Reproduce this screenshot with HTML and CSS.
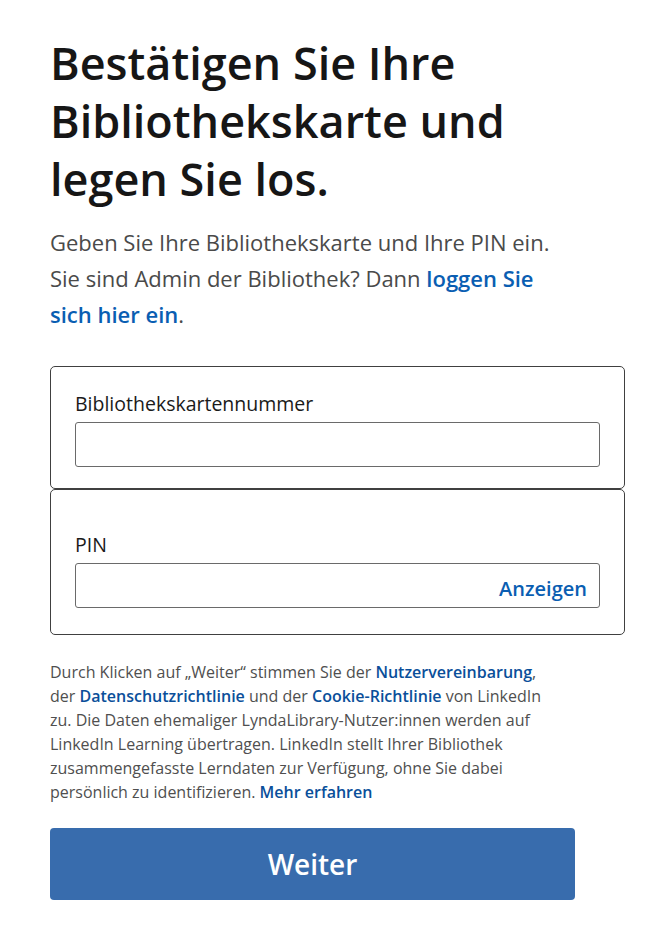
FILE: index.html
```html
<!DOCTYPE html>
<html lang="de">
<head>
    <meta charset="UTF-8">
    <meta name="viewport" content="width=device-width, initial-scale=1.0">
    <title>Bibliothekskarte bestätigen</title>
    <link rel="stylesheet" href="styles.css">
</head>
<body>
    <main class="page">
        <h1 class="title">Bestätigen Sie Ihre Bibliothekskarte und legen Sie los.</h1>
        <p class="intro">
            Geben Sie Ihre Bibliothekskarte und Ihre PIN ein.
            Sie sind Admin der Bibliothek? Dann <a href="#">loggen Sie sich hier ein</a>.
        </p>

        <form class="card-form" onsubmit="return false">
            <div class="field-card">
                <label class="field-label" for="cardNumber">Bibliothekskartennummer</label>
                <input class="field-input" id="cardNumber" type="text">
            </div>
            <div class="field-card field-card--pin">
                <label class="field-label" for="pin">PIN</label>
                <div class="pin-wrap">
                    <input class="field-input" id="pin" type="password">
                    <button type="button" class="show-btn">Anzeigen</button>
                </div>
            </div>

            <p class="legal">
                Durch Klicken auf „Weiter“ stimmen Sie der <a href="#">Nutzervereinbarung</a>,
                der <a href="#">Datenschutzrichtlinie</a> und der <a href="#">Cookie-Richtlinie</a> von LinkedIn
                zu. Die Daten ehemaliger LyndaLibrary-Nutzer:innen werden auf LinkedIn Learning übertragen.
                LinkedIn stellt Ihrer Bibliothek zusammengefasste Lerndaten zur Verfügung, ohne Sie dabei
                persönlich zu identifizieren. <a href="#">Mehr erfahren</a>
            </p>

            <button type="submit" class="submit-btn">Weiter</button>
        </form>
    </main>
</body>
</html>
```

FILE: styles.css
```css
body {
    margin: 0;
    background: #fff;
    font-family: "Open Sans", "Noto Sans", Arial, sans-serif;
    color: #1f1f1f;
}
.page {
    width: 575px;
    padding: 34px 43px 30px 50px;
}
.title {
    max-width: 525px;
    margin: 0;
    font-size: 45px;
    line-height: 58px;
    font-weight: 600;
    color: #161616;
}
.intro {
    max-width: 525px;
    margin: 16px 0 0;
    font-size: 22px;
    line-height: 36px;
    color: #4a4a4a;
}
a {
    color: #0a5eb2;
    font-weight: 600;
    text-decoration: none;
}
.card-form {
    margin-top: 34px;
}
.field-card {
    border: 1px solid #404040;
    border-radius: 5px;
    padding: 23px 24px 21px;
}
.field-card--pin {
    padding-top: 41px;
    padding-bottom: 26px;
}
.field-label {
    display: block;
    font-size: 19.5px;
    line-height: 28px;
    color: #1a1a1a;
    margin-bottom: 4px;
}
.field-input {
    display: block;
    box-sizing: border-box;
    width: 100%;
    height: 45px;
    border: 1px solid #6a6a6a;
    border-radius: 3px;
    padding: 0 12px;
    font-size: 18px;
    font-family: inherit;
}
.pin-wrap {
    position: relative;
}
.show-btn {
    position: absolute;
    right: 13px;
    top: 0;
    bottom: 0;
    margin: auto 0;
    background: none;
    border: none;
    padding: 0;
    font-family: inherit;
    font-size: 20px;
    font-weight: 600;
    color: #0a5eb2;
    cursor: pointer;
    transform: translateY(3px);
}
.legal {
    max-width: 500px;
    margin: 25px 0 0;
    font-size: 16px;
    line-height: 24px;
    color: #4f4f4f;
}
.legal a {
    color: #0a4f9a;
}
.submit-btn {
    display: block;
    width: 525px;
    height: 72px;
    margin-top: 24px;
    background: #386cad;
    border: none;
    border-radius: 4px;
    color: #fff;
    font-family: inherit;
    font-size: 28px;
    font-weight: 600;
    cursor: pointer;
}
```
